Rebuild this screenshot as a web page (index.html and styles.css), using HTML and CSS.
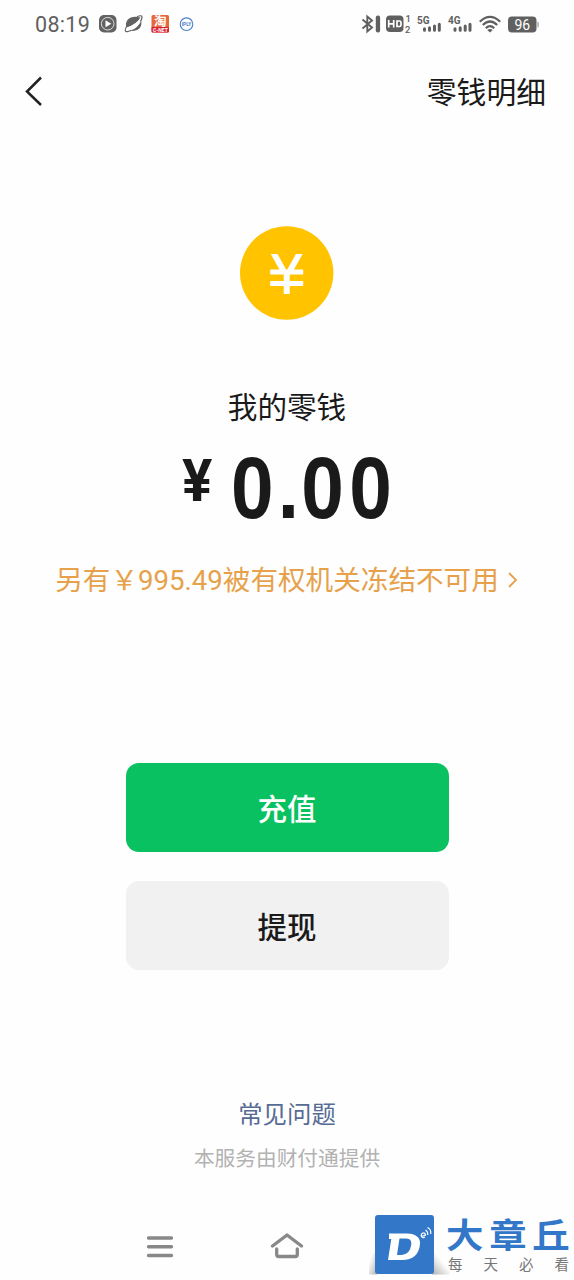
FILE: index.html
```html
<!DOCTYPE html>
<html lang="zh-CN">
<head>
<meta charset="utf-8">
<title>零钱</title>
<link rel="stylesheet" href="styles.css">
</head>
<body>
<div class="screen">
  <div class="status">
    <span class="clock">08:19</span>
    <svg class="status-left" width="100" height="20" viewBox="0 0 100 20">
      <rect x="2" y="1" width="17.500" height="17.500" rx="5" fill="#626262"/>
      <circle cx="10.700" cy="9.700" r="6.300" fill="none" stroke="#ddd" stroke-width="1"/>
      <path d="M8.500 6.200l5.800 3.500-5.800 3.500z" fill="#fff"/>
      <path d="M29.500 13.500C27 7 33 2 40 3L43.500 3.500C42 7 36 12 29.500 13.500z" fill="#626262"/>
      <path d="M29.500 13.500C36 12 42 7 43.500 3.500L44 6.800C42.500 11.500 38 15.500 33 16.500z" fill="#fefefe"/>
      <path d="M33 16.500C38 15.500 42.500 11.500 44 6.800C46 12.500 41 18.500 33 16.500z" fill="#626262"/>
      <path d="M40 2.800C43.500 1 45.800 1.500 44.800 4.300C44.500 5.500 44 6.500 43.500 7.500M30 12C27.500 15.500 27.500 18.500 31 17.500C32.500 17.200 33.500 16.700 34.500 16.200" fill="none" stroke="#626262" stroke-width="1.200"/>
      <rect x="54.500" y="1" width="17.500" height="17.500" rx="1.500" fill="#e8673a"/>
      <path d="M54.500 13h17.500v4a1.500 1.500 0 0 1-1.500 1.500h-14.500a1.500 1.500 0 0 1-1.500-1.500z" fill="#d92236"/>
      <text x="57" y="12" class="app-glyph">淘</text>
      <text x="56" y="17.600" class="app-caption">C-NET</text>
      <circle cx="89.500" cy="10.200" r="6.300" fill="none" stroke="#4b82c9" stroke-width="1.100"/>
      <text x="84.700" y="12" class="reply">IPLY</text>
    </svg>
    <svg class="status-right" width="180" height="22" viewBox="0 0 180 22">
      <path d="M2.500 6.500l9.500 8-4.700 4V3.500l4.700 4-9.500 8" fill="none" stroke="#606060" stroke-width="1.900"/>
      <rect x="15.800" y="2.500" width="4.300" height="17" rx="2" fill="#606060"/>
      <rect x="26" y="2.500" width="17.500" height="16.500" rx="4" fill="#606060"/>
      <path d="M28.700 7v7.500M33.700 7v7.500M28.700 10.800h5M37 8h2.500q1.500 0 1.500 1.500v2.500q0 1.500-1.500 1.500H37z" fill="none" stroke="#fff" stroke-width="1.700"/>
      <text x="45.500" y="8.800" class="tiny">1</text>
      <text x="45" y="19.500" class="tiny">2</text>
      <text x="57" y="10.500" class="net">5G</text>
      <text x="88" y="10.500" class="net">4G</text>
      <path d="M64.500 15.700v1.500M69.500 14.700v2.500M74.500 13v4.200M79.300 11.300v5.900M95 15.700v1.500M100.200 14.700v2.500M105.200 13v4.200M110 11.300v5.900" stroke="#606060" stroke-width="3" stroke-linecap="round" fill="none"/>
      <g fill="none" stroke="#606060" stroke-width="2.200">
        <path d="M119.800 8.700Q130 -1 140.200 8.700M122.800 12Q130 5 137.200 12M125.800 15.200Q130 11 134.200 15.200"/>
      </g>
      <path d="M127.300 17q2.700-1.800 5.400 0L130 19.500z" fill="#606060"/>
      <rect x="148" y="3.500" width="28.500" height="16" rx="4" fill="#606060"/>
      <path d="M177.300 8.500q1.500 0 1.500 1.500v3q0 1.500-1.500 1.500z" fill="#aaa"/>
      <text x="154.500" y="16.700" class="battery">96</text>
    </svg>
  </div>

  <header class="header">
    <svg width="20" height="32" viewBox="0 0 20 32"><path d="M17 2.500L3 16.500L17 30" fill="none" stroke="#222" stroke-width="2.500"/></svg>
    <span class="detail">零钱明细</span>
  </header>

  <main class="wallet">
    <svg class="coin" width="94" height="94" viewBox="0 0 94 94">
      <circle cx="46.700" cy="47" r="46.700" fill="#ffc300"/>
      <path d="M30.800 28H37.500L46.700 44.500L55.900 28H62.600L51.500 48H41.900z" fill="#fff"/>
      <path d="M30.200 46h33M30.200 57.500h33" stroke="#fff" stroke-width="4.800"/>
      <path d="M46.700 45v23" stroke="#fff" stroke-width="6"/>
    </svg>
    <h1 class="label">我的零钱</h1>
    <svg class="amount" width="220" height="100" viewBox="0 0 220 100">
      <text class="yen" transform="translate(5 61) scale(.96 1)">¥</text>
      <text class="value" transform="translate(0 78) scale(.88 1)" x="61.300 114.400 141.100 195.700" y="0">0.00</text>
    </svg>
    <div class="frozen"><span>另有￥995.49被有权机关冻结不可用</span>
      <svg width="12" height="18" viewBox="0 0 12 18"><path d="M2 1l7 7-7 7" fill="none" stroke="#e6a14a" stroke-width="1.800"/></svg>
    </div>
    <button class="button primary">充值</button>
    <button class="button secondary">提现</button>
  </main>

  <footer class="help">
    <span class="faq">常见问题</span>
    <span class="provider">本服务由财付通提供</span>
  </footer>

  <div class="navbar">
    <svg class="menu-icon" width="28" height="24" viewBox="0 0 28 24"><path d="M2.500 3h23M2.500 11.800h23M2.500 20.500h23" stroke="#888" stroke-width="3.400" stroke-linecap="round"/></svg>
    <svg class="home-icon" width="36" height="28" viewBox="0 0 36 28"><path d="M3.500 13L18 2L32.500 13M7.700 16v5.500q0 2 2 2h16.600q2 0 2-2v-5.500" fill="none" stroke="#888" stroke-width="3.300" stroke-linecap="round" stroke-linejoin="round"/></svg>
  </div>

  <div class="watermark">
    <svg class="brand-icon" width="66" height="60" viewBox="0 0 66 60">
      <defs>
        <linearGradient id="shade-left" x1="0" x2="1" y1="0" y2="1"><stop offset=".2" stop-color="#999" stop-opacity="0"/><stop offset="1" stop-color="#888" stop-opacity=".7"/></linearGradient>
        <linearGradient id="shade-right" x1="1" x2="0" y1="0" y2="1"><stop offset=".4" stop-color="#999" stop-opacity="0"/><stop offset="1" stop-color="#888" stop-opacity=".7"/></linearGradient>
      </defs>
      <rect x="0" y="38" width="8" height="21.500" fill="url(#shade-left)"/>
      <rect x="63" y="38" width="18" height="21.500" fill="url(#shade-right)"/>
      <rect x="6" y="0" width="59" height="59" rx="3" fill="#3277c8"/>
      <path fill-rule="evenodd" d="M20 18.500H38Q51.500 19 51 29Q49.500 45 33 45H19L22.300 24H20zM30.500 23.500L28 40H32.500Q41 39.500 42.300 29.500Q42.800 23.500 37.500 23.500z" fill="#fff"/>
      <g fill="none" stroke="#fff" stroke-width="1.200">
        <path d="M52.500 21.500l4-1.500q-.5-2.500-2.500-2q-2.500 1-1.500 3.500q1 2 3.500.5M56.500 15q2.500 1.500 2.300 5M58.500 12.500q4 2 3.200 6.500"/>
      </g>
    </svg>
    <div class="brand-copy">
      <svg class="brand-title" width="130" height="38" viewBox="0 0 130 38"><text class="brand-name" transform="scale(1.100 1)" x="0 39.300 78.400" y="33">大章丘</text></svg>
      <div class="slogan"><span>每</span><span>天</span><span>必</span><span>看</span></div>
    </div>
  </div>
</div>
</body>
</html>
```
FILE: styles.css
```css
* { box-sizing: border-box; }
body {
  margin: 0;
  background: #fefefe;
  color: #1a1a1a;
  font-family: Roboto, "Noto Sans CJK SC", sans-serif;
}
.screen {
  position: relative;
  width: 574px;
  height: 1280px;
  overflow: hidden;
  display: flex;
  flex-direction: column;
}
.status {
  height: 48px;
  padding: 0 34px 0 35px;
  display: flex;
  align-items: center;
}
.clock {
  width: 62px;
  font-size: 21.5px;
  letter-spacing: 0.3px;
  line-height: 48px;
  padding-top: 1px;
  color: #606060;
}
.status-right { margin-left: auto; }
.app-glyph { font-size: 12.5px; font-weight: 700; fill: #fff; }
.app-caption { font-size: 5px; font-weight: 700; fill: #fff; }
.reply { font-size: 4.8px; font-weight: 700; fill: #4b82c9; }
.tiny { font-size: 9.5px; font-weight: 500; fill: #606060; }
.net { font-size: 10px; font-weight: 700; fill: #606060; }
.battery { font-size: 14px; font-weight: 400; fill: #fff; }

.header {
  height: 88px;
  padding: 0 28px 0 24px;
  display: flex;
  align-items: center;
  justify-content: space-between;
}
.header svg { margin-bottom: 3px; }
.detail { padding-top: 2px; font-size: 29.8px; line-height: 40px; }

.wallet {
  padding-top: 90px;
  display: flex;
  flex-direction: column;
  align-items: center;
}
.coin { flex: none; }
.label {
  margin: 68px 0 0;
  font-size: 29.6px;
  font-weight: 400;
  line-height: 40px;
}
.amount { margin-top: 12px; overflow: visible; }
.yen { font-family: Roboto, sans-serif; font-size: 59px; font-weight: 700; fill: #1a1a1a; }
.value { font-family: "Liberation Sans", sans-serif; font-size: 87px; font-weight: 700; fill: #1a1a1a; }
.frozen {
  height: 40px;
  margin-top: 21px;
  display: flex;
  align-items: center;
  gap: 8px;
  color: #e6a14a;
  font-size: 27.6px;
  line-height: 40px;
  white-space: nowrap;
}
.button {
  width: 323px;
  height: 89px;
  padding: 5px 0 0;
  border: 0;
  border-radius: 13px;
  font: 500 29.5px/84px Roboto, "Noto Sans CJK SC", sans-serif;
}
.primary { margin-top: 162px; background: #09c160; color: #fff; }
.secondary { margin-top: 29px; background: #f1f1f1; color: #1a1a1a; }

.help {
  margin-top: 125px;
  display: flex;
  flex-direction: column;
  align-items: center;
}
.faq { font-size: 24.4px; line-height: 40px; color: #576b95; }
.provider { margin-top: 8px; font-size: 20.7px; line-height: 32px; color: #b2b2b2; }

.navbar {
  margin-top: 58px;
  padding-left: 146px;
  display: flex;
  align-items: center;
}
.home-icon { margin-left: 95px; }

.watermark {
  position: absolute;
  left: 369px;
  top: 1215px;
  display: flex;
  gap: 11px;
}
.brand-icon { overflow: visible; }
.brand-copy { display: flex; flex-direction: column; }
.brand-title { overflow: visible; }
.brand-name {
  font-family: "Noto Sans CJK SC", sans-serif;
  font-size: 34px;
  font-weight: 700;
  fill: #3277c8;
}
.slogan {
  width: 121px;
  height: 20px;
  display: flex;
  justify-content: space-between;
  font-size: 14.5px;
  line-height: 20px;
  margin: 3px 0 0 2px;
  color: #777;
}
```
